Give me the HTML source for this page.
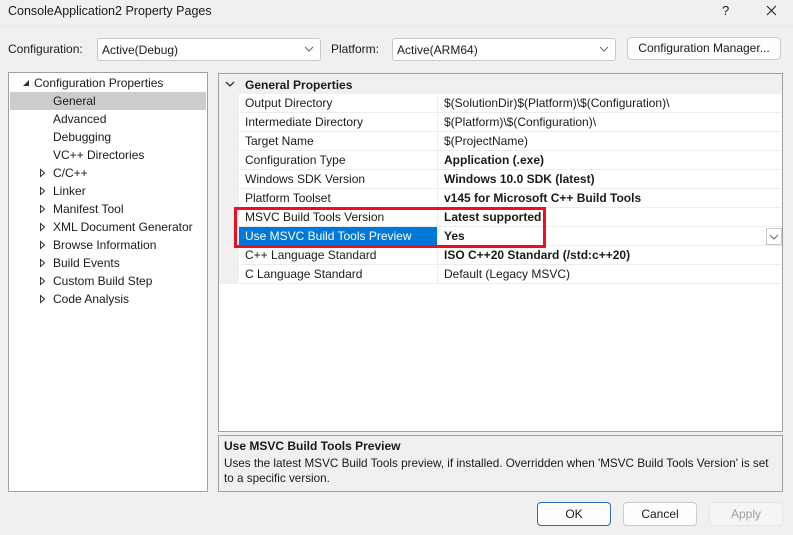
<!DOCTYPE html>
<html><head><style>
*{box-sizing:border-box;margin:0;padding:0}
body{width:793px;height:535px;background:#f0f0f0;font-family:"Liberation Sans",sans-serif;font-size:12px;color:#1a1a1a;position:relative;overflow:hidden}
.a{position:absolute;white-space:nowrap}
.combo{position:absolute;background:#fff;border:1px solid #c8c8c8;border-radius:3px;height:23px;padding:4px 4px;}
.chev{position:absolute;right:6px;top:5px;width:10px;height:10px}
.btn{position:absolute;background:#fdfdfd;border:1px solid #ccc;border-radius:4px;text-align:center;line-height:22px;height:24px}
.tree{position:absolute;left:8px;top:72px;width:200px;height:420px;background:#fff;border:1px solid #a0a0a0}
.ti{position:absolute;height:18px;line-height:18px;white-space:nowrap}
.tri{position:absolute;width:8px;height:10px}
.grid{position:absolute;left:218px;top:73px;width:565px;height:359px;background:#fff;border:1px solid #a0a0a0}
.row{position:absolute;left:0;width:563px;height:19px;border-bottom:1px solid #ececec}
.row .l{position:absolute;left:20px;width:199px;height:19px;line-height:18px;padding-left:6px;border-right:1px solid #ececec}
.row .v{position:absolute;left:220px;height:19px;line-height:18px;padding-left:5px}
.gut{position:absolute;left:0;top:0;width:20px;height:19px;background:#f0f0f0}
b{font-weight:bold}
</style></head><body>
<div class="a" style="left:8px;top:4px;font-size:12.5px">ConsoleApplication2 Property Pages</div>
<div class="a" style="left:722px;top:3px;font-size:13px">?</div>
<svg class="a" style="left:766px;top:5px" width="11" height="11"><path d="M1 1L10 10M10 1L1 10" stroke="#222" stroke-width="1.1"/></svg>
<div style="position:absolute;left:0;top:26px;width:793px;height:1px;background:#e8e8e8"></div>

<div class="a" style="left:8px;top:42px">Configuration:</div>
<div class="combo" style="left:97px;top:38px;width:224px">Active(Debug)<svg class="chev" viewBox="0 0 10 10"><path d="M1 3L5 7L9 3" fill="none" stroke="#666"/></svg></div>
<div class="a" style="left:331px;top:42px">Platform:</div>
<div class="combo" style="left:392px;top:38px;width:224px">Active(ARM64)<svg class="chev" viewBox="0 0 10 10"><path d="M1 3L5 7L9 3" fill="none" stroke="#666"/></svg></div>
<div class="btn" style="left:627px;top:37px;width:154px;height:23px;line-height:21px">Configuration Manager...</div>

<div class="tree">
<svg class="tri" style="left:13px;top:5px" viewBox="0 0 8 10"><path d="M7 2L7 8L1 8Z" fill="#333"/></svg>
<div class="ti" style="left:25px;top:1px">Configuration Properties</div>
<div style="position:absolute;left:1px;top:19px;width:196px;height:18px;background:#cccccc"></div>
<div class="ti" style="left:44px;top:19px">General</div>
<div class="ti" style="left:44px;top:37px">Advanced</div>
<div class="ti" style="left:44px;top:55px">Debugging</div>
<div class="ti" style="left:44px;top:73px">VC++ Directories</div>
<div class="ti" style="left:44px;top:91px">C/C++</div>
<div class="ti" style="left:44px;top:109px">Linker</div>
<div class="ti" style="left:44px;top:127px">Manifest Tool</div>
<div class="ti" style="left:44px;top:145px">XML Document Generator</div>
<div class="ti" style="left:44px;top:163px">Browse Information</div>
<div class="ti" style="left:44px;top:181px">Build Events</div>
<div class="ti" style="left:44px;top:199px">Custom Build Step</div>
<div class="ti" style="left:44px;top:217px">Code Analysis</div>
<svg style="position:absolute;left:30px;top:95px" width="8" height="140">
<g fill="none" stroke="#333"><path d="M1.5 1.5L5.5 5L1.5 8.5Z"/><path d="M1.5 19.5L5.5 23L1.5 26.5Z"/><path d="M1.5 37.5L5.5 41L1.5 44.5Z"/><path d="M1.5 55.5L5.5 59L1.5 62.5Z"/><path d="M1.5 73.5L5.5 77L1.5 80.5Z"/><path d="M1.5 91.5L5.5 95L1.5 98.5Z"/><path d="M1.5 109.5L5.5 113L1.5 116.5Z"/><path d="M1.5 127.5L5.5 131L1.5 134.5Z"/></g></svg>
</div>

<div class="grid">
<div style="position:absolute;left:0;top:0;width:563px;height:20px;background:#f0f0f0"></div>
<svg class="a" style="left:6px;top:7px" width="10" height="7"><path d="M1 1L5 5L9 1" fill="none" stroke="#333" stroke-width="1.3"/></svg>
<div class="a" style="left:26px;top:4px;font-weight:bold">General Properties</div>
<div class="row" style="top:20px"><div class="gut"></div><div class="l">Output Directory</div><div class="v">$(SolutionDir)$(Platform)\$(Configuration)\</div></div>
<div class="row" style="top:39px"><div class="gut"></div><div class="l">Intermediate Directory</div><div class="v">$(Platform)\$(Configuration)\</div></div>
<div class="row" style="top:58px"><div class="gut"></div><div class="l">Target Name</div><div class="v">$(ProjectName)</div></div>
<div class="row" style="top:77px"><div class="gut"></div><div class="l">Configuration Type</div><div class="v"><b>Application (.exe)</b></div></div>
<div class="row" style="top:96px"><div class="gut"></div><div class="l">Windows SDK Version</div><div class="v"><b>Windows 10.0 SDK (latest)</b></div></div>
<div class="row" style="top:115px"><div class="gut"></div><div class="l">Platform Toolset</div><div class="v"><b>v145 for Microsoft C++ Build Tools</b></div></div>
<div class="row" style="top:134px"><div class="gut"></div><div class="l">MSVC Build Tools Version</div><div class="v"><b>Latest supported</b></div></div>
<div class="row" style="top:153px"><div class="gut"></div><div class="l" style="background:#0078d7;color:#fff">Use MSVC Build Tools Preview</div><div class="v"><b>Yes</b></div>
<div style="position:absolute;left:547px;top:1px;width:16px;height:17px;border:1px solid #c8c8c8;background:#fff"><svg width="14" height="15"><path d="M3 6L7 10L11 6" fill="none" stroke="#666"/></svg></div></div>
<div class="row" style="top:172px"><div class="gut"></div><div class="l">C++ Language Standard</div><div class="v"><b>ISO C++20 Standard (/std:c++20)</b></div></div>
<div class="row" style="top:191px"><div class="gut"></div><div class="l">C Language Standard</div><div class="v">Default (Legacy MSVC)</div></div>
</div>
<div style="position:absolute;left:234px;top:207px;width:312px;height:41px;border:3px solid #e81123"></div>

<div style="position:absolute;left:218px;top:435px;width:565px;height:57px;border:1px solid #a0a0a0;background:#f0f0f0"></div>
<div class="a" style="left:224px;top:439px;font-weight:bold">Use MSVC Build Tools Preview</div>
<div class="a" style="left:224px;top:457px;font-size:11.7px">Uses the latest MSVC Build Tools preview, if installed. Overridden when 'MSVC Build Tools Version' is set</div>
<div class="a" style="left:224px;top:472px;font-size:11.7px">to a specific version.</div>

<div class="btn" style="left:537px;top:502px;width:74px;border:1px solid #2a6fb3">OK</div>
<div class="btn" style="left:623px;top:502px;width:74px">Cancel</div>
<div class="btn" style="left:709px;top:502px;width:74px;background:#f5f5f5;border-color:#e5e5e5;color:#a0a0a0">Apply</div>
</body></html>
